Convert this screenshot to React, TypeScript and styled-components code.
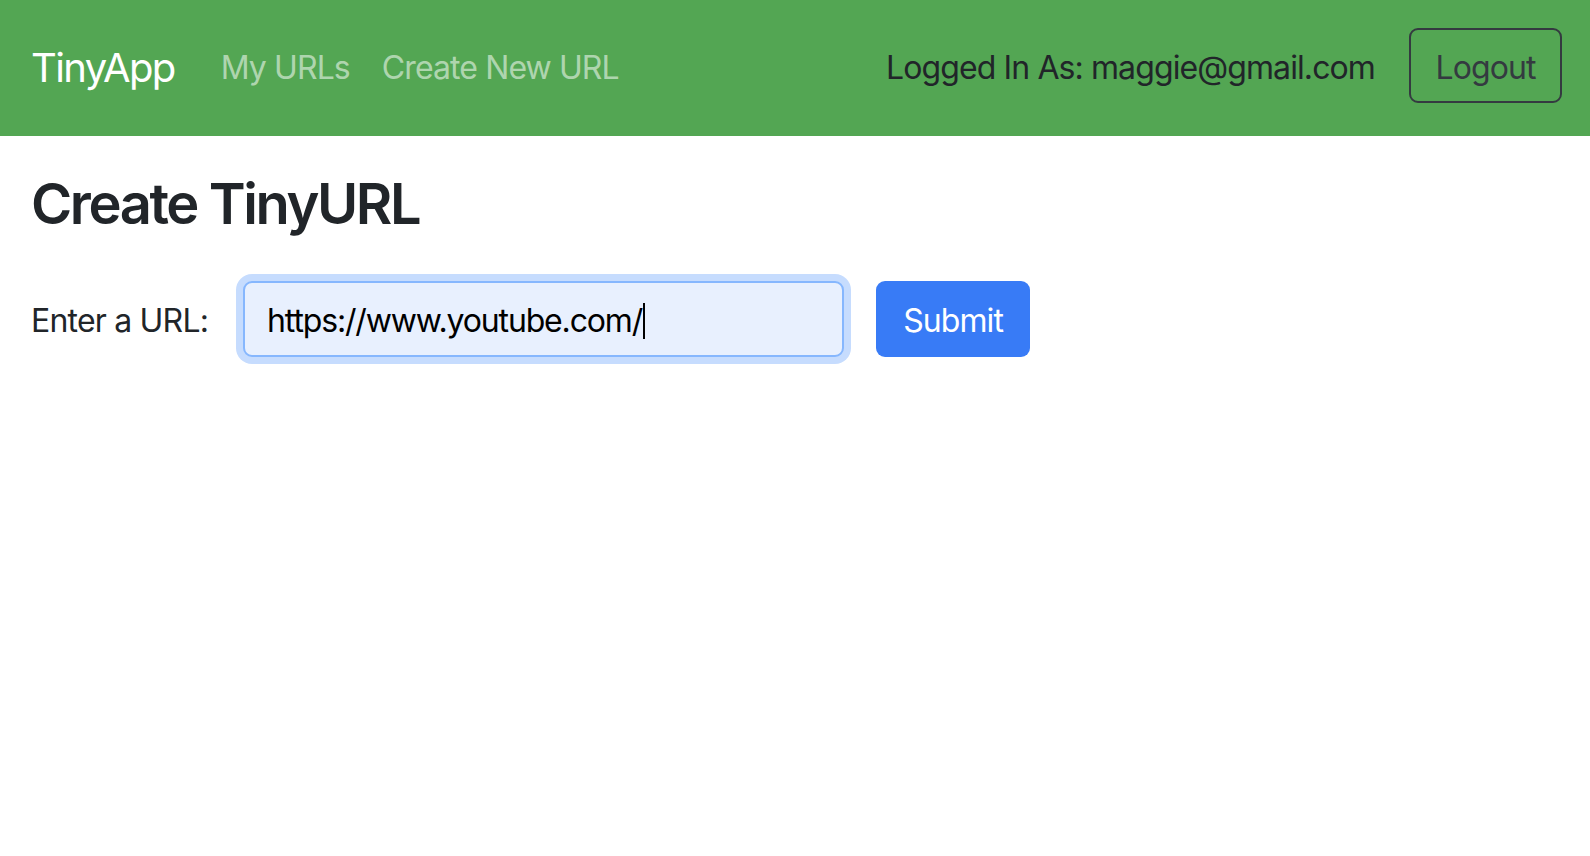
import * as React from 'react';
import styled, { createGlobalStyle } from 'styled-components';

const GlobalStyle = createGlobalStyle`
    body {
        margin: 0;
        font-family: Inter, "Noto Sans", "Liberation Sans", sans-serif;
        color: #212529;
        background: #ffffff;
    }
`;

const Navbar = styled.nav`
    display: flex;
    align-items: center;
    height: 136px;
    padding: 28px 28px 33px 31px;
    background-color: #53a653;
    box-sizing: border-box;
`;
const Brand = styled.a`
    padding-top: 4px;
    font-size: 40px;
    color: #ffffff;
    text-decoration: none;
    margin-right: 46px;
    letter-spacing: -1.6px;
`;
const NavLinks = styled.div`
    display: flex;
    gap: 32px;
    padding-top: 4px;
`;
const NavLink = styled.a`
    font-size: 32px;
    color: rgba(255, 255, 255, 0.55);
    text-decoration: none;
    letter-spacing: -0.9px;
`;
const UserArea = styled.div`
    display: flex;
    align-items: center;
    margin-left: auto;
    gap: 34px;
`;
const UserText = styled.span`
    padding-top: 4px;
    font-size: 32px;
    color: #212529;
    letter-spacing: -0.9px;
`;
const OutlineButton = styled.button`
    width: 153px;
    height: 75px;
    padding: 4px 0 0;
    border: 2px solid #343a40;
    border-radius: 9px;
    background: transparent;
    color: #343a40;
    font-family: inherit;
    font-size: 32px;
    letter-spacing: -0.9px;
    cursor: pointer;
`;

const Main = styled.main`
    padding: 0 31px 40px;
`;
const Heading = styled.h2`
    margin: 35px 0 0;
    font-size: 56px;
    font-weight: 600;
    line-height: 1.2;
    letter-spacing: -2.4px;
`;
const FormRow = styled.form`
    display: flex;
    align-items: center;
    margin-top: 43px;
`;
const Label = styled.label`
    padding-top: 3px;
    font-size: 32px;
    margin-right: 35px;
    letter-spacing: -0.8px;
`;
const Field = styled.div`
    display: flex;
    align-items: center;
    width: 601px;
    height: 76px;
    box-sizing: border-box;
    padding: 3px 22px 0;
    border: 2px solid #86b7fe;
    border-radius: 9px;
    background-color: #e8f0fe;
    box-shadow: 0 0 0 7px #c6dcfe;
    font-size: 32px;
    color: #000000;
    letter-spacing: -1.15px;
`;
const Caret = styled.span`
    display: inline-block;
    width: 2px;
    height: 36px;
    margin-left: 1px;
    background: #000000;
`;
const SubmitButton = styled.button`
    margin-left: 32px;
    width: 154px;
    height: 76px;
    padding: 3px 0 0;
    border: none;
    border-radius: 9px;
    background-color: #387bf6;
    color: #ffffff;
    font-family: inherit;
    font-size: 32px;
    letter-spacing: -0.9px;
    cursor: pointer;
`;

export default function App()
{
    const [url] = React.useState("https://www.youtube.com/");

    return (<>
        <GlobalStyle />
        <Navbar>
            <Brand href="#">TinyApp</Brand>
            <NavLinks>
                <NavLink href="#">My URLs</NavLink>
                <NavLink href="#">Create New URL</NavLink>
            </NavLinks>
            <UserArea>
                <UserText>Logged In As: maggie@gmail.com</UserText>
                <OutlineButton type="button">Logout</OutlineButton>
            </UserArea>
        </Navbar>
        <Main>
            <Heading>Create TinyURL</Heading>
            <FormRow onSubmit={e => e.preventDefault()}>
                <Label>Enter a URL:</Label>
                <Field>
                    <span>{url}</span>
                    <Caret />
                </Field>
                <SubmitButton type="submit">Submit</SubmitButton>
            </FormRow>
        </Main>
    </>);
}
